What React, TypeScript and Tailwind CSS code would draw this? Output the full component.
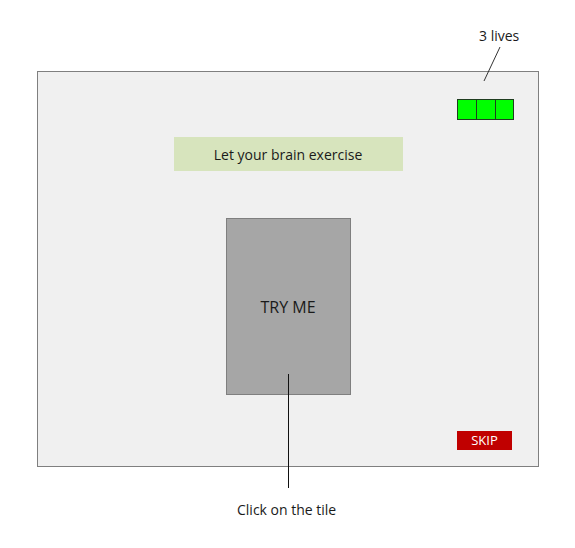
export default function App() {
  return (
    <div className="relative w-[575px] h-[548px] bg-white font-['Open_Sans',sans-serif] text-[#1a1a1a]">
      {/* game panel */}
      <div className="ml-[37px] pt-[71px]">
        <div className="w-[502px] h-[396px] border border-[#7f7f7f] bg-[#f0f0f0] flex flex-col items-center">
          <div className="self-end mt-[27px] mr-[24px] flex border border-[#1f3d1f]">
            <div className="w-[18px] h-[19px] bg-[#00ff00]" />
            <div className="w-[19px] h-[19px] bg-[#00ff00] border-l border-[#1f3d1f]" />
            <div className="w-[18px] h-[19px] bg-[#00ff00] border-l border-[#1f3d1f]" />
          </div>
          <div className="mt-[17px] w-[229px] h-[34px] bg-[#d7e4bd] flex items-center justify-center text-[14px]">
            Let your brain exercise
          </div>
          <button className="mt-[47px] w-[125px] h-[177px] bg-[#a6a6a6] border border-[#7f7f7f] flex items-center justify-center text-[16px]">
            TRY ME
          </button>
          <div className="self-end mt-[36px] mr-[26px] w-[55px] h-[19px] bg-[#c00000] text-white text-[13px] flex items-center justify-center">
            SKIP
          </div>
        </div>
      </div>

      {/* annotations */}
      <span className="absolute left-[479px] top-[26px] text-[14px] leading-[20px]">3 lives</span>
      <span className="absolute left-[237px] top-[500px] text-[14px] leading-[20px]">Click on the tile</span>
      <svg className="absolute inset-0 pointer-events-none" width="575" height="548">
        <line x1="484" y1="81" x2="500" y2="47" stroke="#333" strokeWidth="1" />
        <line x1="288.5" y1="374" x2="288.5" y2="488" stroke="#111" strokeWidth="1" />
      </svg>
    </div>
  );
}
